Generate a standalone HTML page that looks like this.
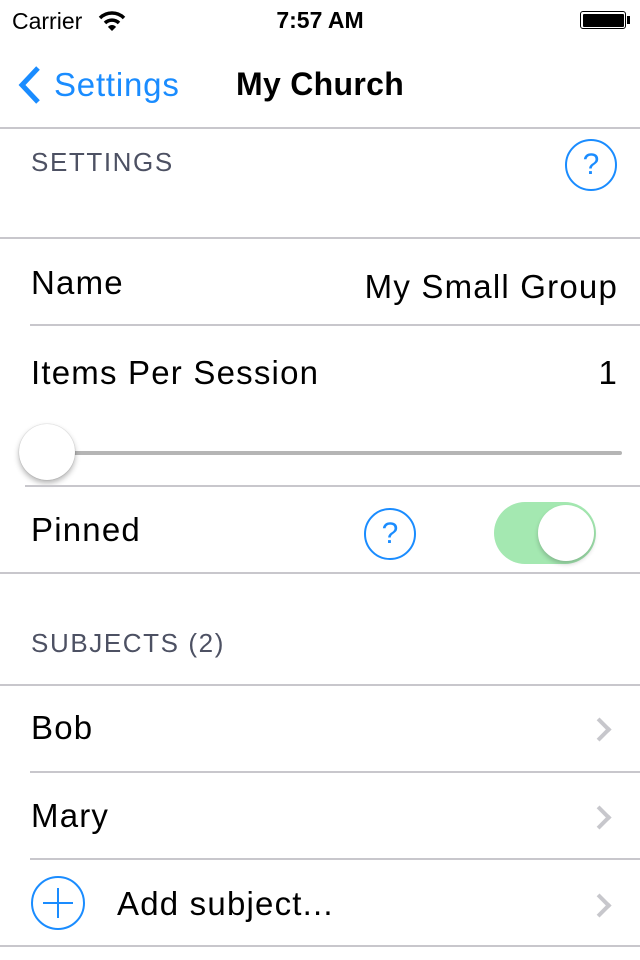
<!DOCTYPE html>
<html><head><style>
body{margin:0;width:640px;height:960px;background:#fff;font-family:"Liberation Sans",sans-serif;position:relative;overflow:hidden}
.a{position:absolute;white-space:nowrap}
.l{position:absolute;height:2px;background:#c8c7cc;right:0}
.q{position:absolute;width:52px;height:52px;border:2px solid #1a8cff;border-radius:50%;box-sizing:border-box;color:#1a8cff;font-size:30px;text-align:center;line-height:48px}
.t{font-size:33px;color:#000;letter-spacing:1.2px}
.h{font-size:26px;color:#4d5163;letter-spacing:1.6px}
.ch{position:absolute;right:32px;width:13px;height:13px;border-right:4px solid #c7c7cc;border-top:4px solid #c7c7cc;transform:rotate(45deg)}
</style></head><body>
<div class="a" style="left:12px;top:8px;font-size:23px">Carrier</div>
<svg class="a" style="left:98px;top:10px" width="28" height="22" viewBox="0 0 28 22"><path d="M2 8 A17 17 0 0 1 26 8" stroke="#000" stroke-width="3.5" fill="none"/><path d="M7 13 A10 10 0 0 1 21 13" stroke="#000" stroke-width="3.5" fill="none"/><path d="M10 17 L14 21 L18 17 A5 5 0 0 0 10 17Z" fill="#000"/></svg>
<div class="a" style="left:0;width:640px;text-align:center;top:7px;font-size:23px;font-weight:bold">7:57 AM</div>
<div class="a" style="left:580px;top:11px;width:46px;height:18px;border:1.5px solid #000;border-radius:3px;box-sizing:border-box;padding:1.5px"><div style="background:#000;height:100%;border-radius:1px"></div></div>
<div class="a" style="left:627px;top:16px;width:3px;height:8px;background:#000"></div>
<svg class="a" style="left:14px;top:65px" width="30" height="40"><path d="M24 3 L8 20 L24 37" stroke="#1a8cff" stroke-width="5" fill="none"/></svg>
<div class="a" style="left:54px;top:66px;font-size:33px;color:#1a8cff;letter-spacing:0.8px">Settings</div>
<div class="a" style="left:236px;top:66px;font-size:32px;font-weight:bold;letter-spacing:0.3px">My Church</div>
<div class="l" style="left:0;top:127px"></div>
<div class="a h" style="left:31px;top:147px">SETTINGS</div>
<div class="q" style="left:565px;top:139px">?</div>
<div class="l" style="left:0;top:237px"></div>
<div class="a t" style="left:31px;top:264px">Name</div>
<div class="a t" style="right:22px;top:268px">My Small Group</div>
<div class="l" style="left:30px;top:324px"></div>
<div class="a t" style="left:31px;top:354px">Items Per Session</div>
<div class="a t" style="right:22px;top:354px">1</div>
<div class="a" style="left:40px;top:451px;width:582px;height:4px;border-radius:2px;background:#b5b5b5"></div>
<div class="a" style="left:19px;top:424px;width:56px;height:56px;border-radius:50%;background:#fff;box-shadow:0 3px 6px rgba(0,0,0,.3),0 0 1px rgba(0,0,0,.3)"></div>
<div class="l" style="left:25px;top:485px"></div>
<div class="a t" style="left:31px;top:511px">Pinned</div>
<div class="q" style="left:364px;top:508px">?</div>
<div class="a" style="left:494px;top:502px;width:102px;height:62px;border-radius:31px;background:#a4e8b1"></div>
<div class="a" style="left:538px;top:505px;width:56px;height:56px;border-radius:50%;background:#fff;box-shadow:0 3px 5px rgba(0,0,0,.2)"></div>
<div class="l" style="left:0;top:572px"></div>
<div class="a h" style="left:31px;top:628px">SUBJECTS (2)</div>
<div class="l" style="left:0;top:684px"></div>
<div class="a t" style="left:31px;top:709px">Bob</div><div class="ch" style="top:721px"></div>
<div class="l" style="left:30px;top:771px"></div>
<div class="a t" style="left:31px;top:797px">Mary</div><div class="ch" style="top:809px"></div>
<div class="l" style="left:30px;top:858px"></div>
<div class="a" style="left:31px;top:876px;width:54px;height:54px;border:2px solid #1a8cff;border-radius:50%;box-sizing:border-box"></div>
<div class="a" style="left:43px;top:902px;width:30px;height:2px;background:#1a8cff"></div>
<div class="a" style="left:57px;top:888px;width:2px;height:30px;background:#1a8cff"></div>
<div class="a t" style="left:117px;top:885px">Add subject...</div><div class="ch" style="top:897px"></div>
<div class="l" style="left:0;top:945px"></div>
</body></html>
